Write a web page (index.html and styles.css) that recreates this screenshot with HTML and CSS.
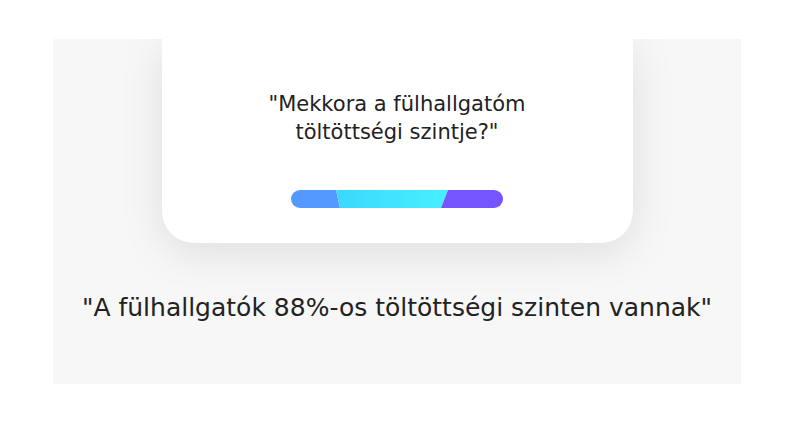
FILE: index.html
```html
<!DOCTYPE html>
<html lang="hu">
<head>
<meta charset="utf-8">
<title>Galaxy Buds</title>
<link rel="stylesheet" href="styles.css">
</head>
<body>
<section class="panel">
  <div class="card">
    <p class="question">"Mekkora a fülhallgatóm<br>töltöttségi szintje?"</p>
    <svg class="bar" width="212" height="18" viewBox="0 0 212 18" aria-hidden="true">
      <defs>
        <clipPath id="pill"><rect x="0" y="0" width="212" height="18" rx="9" ry="9"/></clipPath>
        <linearGradient id="cyan" x1="0" y1="0" x2="1" y2="0">
          <stop offset="0" stop-color="#3bd8fc"/>
          <stop offset="1" stop-color="#47efff"/>
        </linearGradient>
      </defs>
      <g clip-path="url(#pill)">
        <polygon points="0,0 45,0 49,18 0,18" fill="#5399ff"/>
        <polygon points="45,0 157,0 150,18 49,18" fill="url(#cyan)"/>
        <polygon points="157,0 212,0 212,18 150,18" fill="#7455ff"/>
      </g>
    </svg>
  </div>
  <p class="answer">"A fülhallgatók 88%-os töltöttségi szinten vannak"</p>
</section>
</body>
</html>
```
FILE: styles.css
```css
html, body {
  margin: 0;
  padding: 0;
  background: #ffffff;
}
body {
  font-family: "DejaVu Sans", "Open Sans", sans-serif;
  color: #222222;
}
.panel {
  margin: 39px 0 0 53px;
  width: 688px;
  height: 345px;
  background: #f7f7f7;
  overflow: hidden;
  display: flex;
  flex-direction: column;
  align-items: center;
}
.card {
  width: 471px;
  height: 204px;
  box-sizing: border-box;
  background: #ffffff;
  border-radius: 0 0 32px 32px;
  box-shadow: 0 10px 44px rgba(0, 0, 0, 0.1);
  display: flex;
  flex-direction: column;
  align-items: center;
  padding-top: 51px;
}
.question {
  margin: 0;
  font-size: 21px;
  line-height: 28px;
  text-align: center;
}
.bar {
  display: block;
  margin-top: 44px;
  margin-right: 1px;
}
.answer {
  margin: 49px 0 0;
  font-size: 25px;
  line-height: 32px;
  text-align: center;
}
```
